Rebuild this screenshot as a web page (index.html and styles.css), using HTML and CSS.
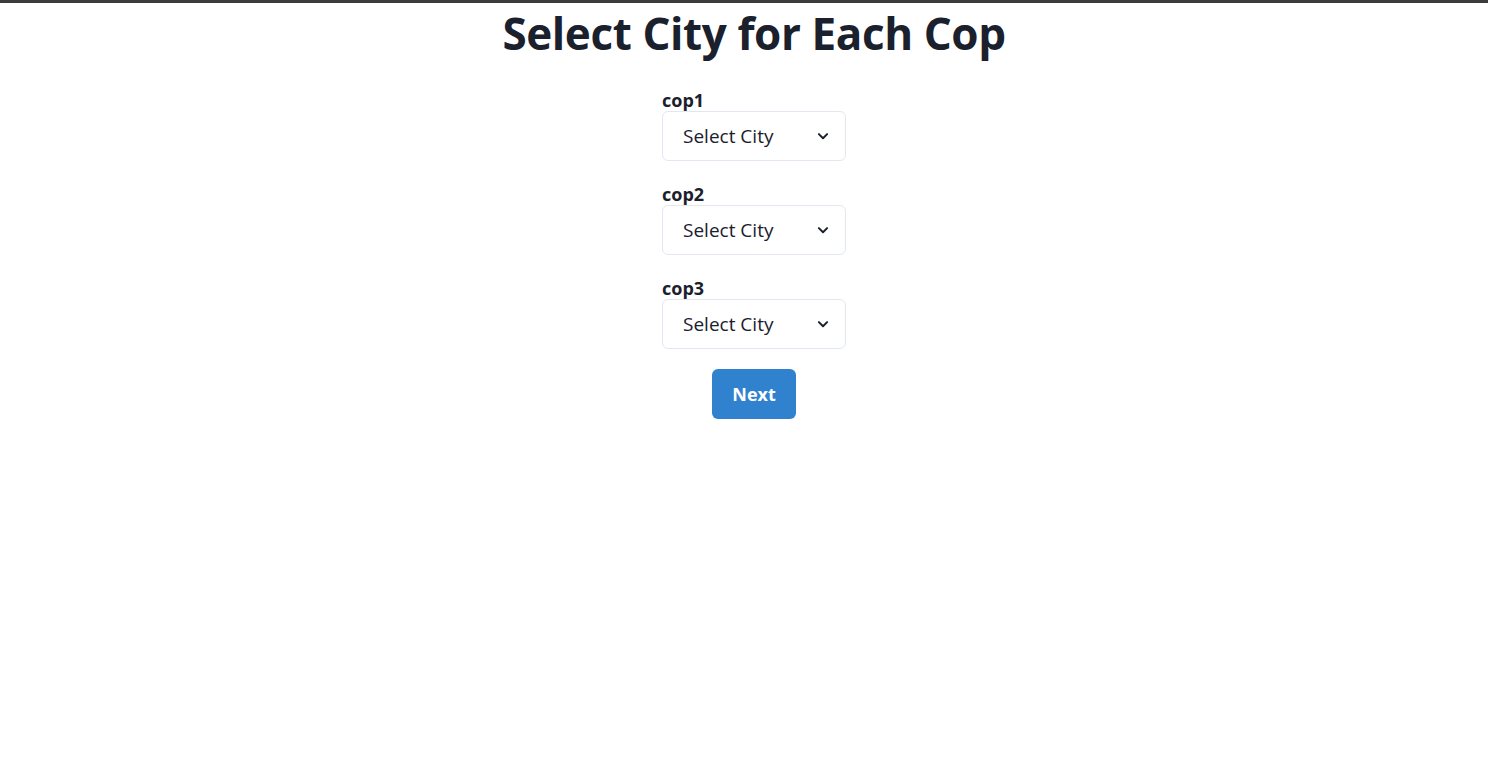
FILE: index.html
```html
<!DOCTYPE html>
<html>
<head>
<meta charset="utf-8">
<link rel="stylesheet" href="styles.css">
</head>
<body>
<div class="topbar"></div>
<main class="page">
  <h1 class="title">Select City for Each Cop</h1>
  <form class="form">
    <div class="group">
      <label class="label">cop1</label>
      <div class="select"><span>Select City</span>
        <svg class="chev" viewBox="0 0 24 24" width="18" height="18"><path d="M6.5 9.5l5.5 5.5 5.5-5.5" fill="none" stroke="#1a202c" stroke-width="2.6" stroke-linecap="round" stroke-linejoin="round"/></svg>
      </div>
    </div>
    <div class="group">
      <label class="label">cop2</label>
      <div class="select"><span>Select City</span>
        <svg class="chev" viewBox="0 0 24 24" width="18" height="18"><path d="M6.5 9.5l5.5 5.5 5.5-5.5" fill="none" stroke="#1a202c" stroke-width="2.6" stroke-linecap="round" stroke-linejoin="round"/></svg>
      </div>
    </div>
    <div class="group">
      <label class="label">cop3</label>
      <div class="select"><span>Select City</span>
        <svg class="chev" viewBox="0 0 24 24" width="18" height="18"><path d="M6.5 9.5l5.5 5.5 5.5-5.5" fill="none" stroke="#1a202c" stroke-width="2.6" stroke-linecap="round" stroke-linejoin="round"/></svg>
      </div>
    </div>
    <button type="button" class="btn">Next</button>
  </form>
</main>
</body>
</html>
```

FILE: styles.css
```css
* { box-sizing: border-box; }
html, body { margin: 0; padding: 0; background: #fff; }
body { font-family: "Open Sans", "Noto Sans", sans-serif; color: #1a202c; }
.topbar { height: 3px; background: #3c3c3c; }
.page { display: flex; flex-direction: column; align-items: center; padding-left: 20px; }
.title { margin: 4px 0 0; font-size: 44px; font-weight: 700; line-height: 52px; letter-spacing: -0.4px; }
.form { display: flex; flex-direction: column; align-items: center; margin-top: 30px; }
.group { display: flex; flex-direction: column; align-items: flex-start; width: 184px; margin-bottom: 22px; }
.label { font-size: 18px; font-weight: 700; line-height: 22px; }
.select { width: 184px; height: 50px; border: 1px solid #e2e8f0; border-radius: 6px; display: flex; align-items: center; justify-content: space-between; padding: 0 13px 0 20px; font-size: 19px; color: #1a202c; }
.chev { display: block; }
.btn { margin-top: -2px; width: 84px; height: 50px; border: none; border-radius: 6px; background: #3182ce; color: #fff; font-family: inherit; font-size: 18px; font-weight: 700; }
```
